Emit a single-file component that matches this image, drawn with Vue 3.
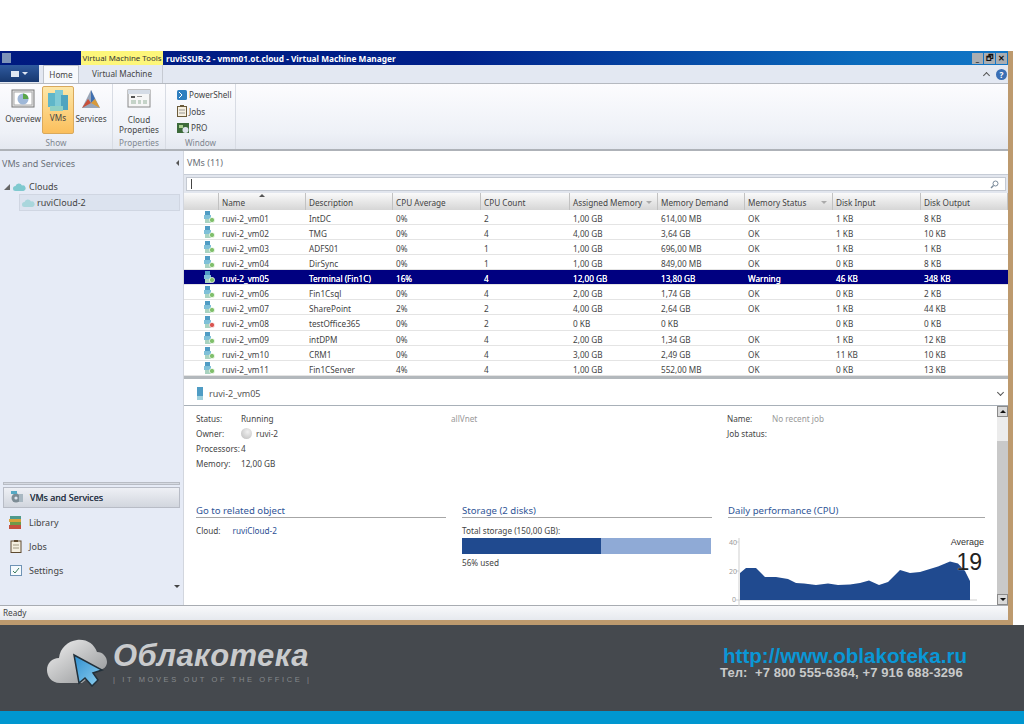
<template>
  <div class="page">
    <div class="top-space"></div>
    <div class="window">
      <div class="titlebar">
        <span class="app-icon"></span>
        <span class="tool-tag">Virtual Machine Tools</span>
        <span class="title">ruviSSUR-2 - vmm01.ot.cloud - Virtual Machine Manager</span>
        <div class="win-btns">
          <span class="win-btn">_</span>
          <span class="win-btn">🗗︎</span>
          <span class="win-btn close">✕</span>
        </div>
      </div>

      <div class="tabs">
        <div class="file-btn"><span class="file-glyph"></span><span class="file-arrow"></span></div>
        <div class="tab active">Home</div>
        <div class="tab">Virtual Machine</div>
        <div class="tabs-right">
          <span class="caret-up"></span>
          <span class="help">?</span>
        </div>
      </div>

      <div class="ribbon">
        <div class="group group-show">
          <div class="group-items">
            <div class="rb-btn">
              <svg width="24" height="19" viewBox="0 0 24 19">
                <rect x="1" y="1" width="22" height="17" fill="#e8e8e8" stroke="#777" />
                <rect x="3" y="3" width="18" height="13" fill="#fff" stroke="#aaa" />
                <circle cx="12" cy="10" r="5.5" fill="#9fb8d8" />
                <path d="M12 10V4.5A5.5 5.5 0 0 1 17.5 10Z" fill="#5aa648" />
              </svg>
              <span>Overview</span>
            </div>
            <div class="rb-btn selected">
              <svg width="24" height="24" viewBox="0 0 24 24">
                <rect x="2" y="4" width="8" height="14" fill="#5fb6c9" />
                <rect x="9" y="1" width="8" height="18" fill="#7fcad6" />
                <rect x="15" y="6" width="7" height="15" fill="#4fa4bf" />
                <rect x="4" y="17" width="13" height="5" fill="#8fd0c4" />
              </svg>
              <span>VMs</span>
            </div>
            <div class="rb-btn services">
              <svg width="22" height="22" viewBox="0 0 22 22">
                <path d="M11 1L20 19H2Z" fill="#9aa6b8" />
                <path d="M11 1L15 10L11 14Z" fill="#3f6fb0" />
                <path d="M2 19L8 10L11 14Z" fill="#c9503a" />
                <path d="M20 19L15 10L11 14Z" fill="#d99a3a" />
              </svg>
              <span>Services</span>
            </div>
          </div>
          <div class="group-name">Show</div>
        </div>

        <div class="group group-props">
          <div class="group-items">
            <div class="rb-btn cloud-props">
              <svg width="24" height="19" viewBox="0 0 24 19">
                <rect x="1" y="1" width="22" height="17" fill="#f6f6f6" stroke="#8a8a8a" />
                <rect x="1" y="1" width="22" height="4" fill="#d5dce6" />
                <rect x="4" y="7" width="4" height="2" fill="#555" />
                <rect x="10" y="7" width="5" height="1" fill="#999" />
                <rect x="4" y="11" width="5" height="4" fill="#c5d3c8" />
                <rect x="11" y="11" width="3" height="4" fill="#c5d3c8" />
                <rect x="16" y="11" width="4" height="4" fill="#c5d3c8" />
              </svg>
              <span>Cloud<br />Properties</span>
            </div>
          </div>
          <div class="group-name">Properties</div>
        </div>

        <div class="group group-window">
          <div class="window-items">
            <div class="rb-small">
              <svg width="10" height="10" viewBox="0 0 10 10"><rect width="10" height="10" rx="1.5" fill="#2f7fbf" /><path d="M2 2l3 3-3 3" stroke="#fff" fill="none" /></svg>
              PowerShell
            </div>
            <div class="rb-small">
              <svg width="10" height="12" viewBox="0 0 10 12"><rect x=".5" y="1.5" width="9" height="10" fill="#f5efe0" stroke="#6a5a3a" /><rect x="3" y="0" width="4" height="2" fill="#6a5a3a" /><path d="M2 5h6M2 8h6" stroke="#999" /></svg>
              Jobs
            </div>
            <div class="rb-small">
              <svg width="12" height="10" viewBox="0 0 12 10"><rect width="12" height="10" fill="#3c6a3a" /><rect x="2" y="2" width="4" height="3" fill="#a8cf8e" /><circle cx="8.5" cy="7" r="3" fill="#dfe5ee" /></svg>
              PRO
            </div>
          </div>
          <div class="group-name">Window</div>
        </div>
      </div>

      <div class="main">
        <aside class="sidebar">
          <div class="side-head">
            <span>VMs and Services</span>
            <span class="collapse"></span>
          </div>
          <div class="tree">
            <div class="tree-root">
              <span class="tree-arrow"></span>
              <svg class="cloud" width="13" height="8" viewBox="0 0 13 8"><path d="M2.5 8A2.5 2.5 0 0 1 2.5 3 3.5 3.5 0 0 1 9 2.5 2.8 2.8 0 0 1 10.5 8Z" fill="#7fc9cf" /></svg>
              Clouds
            </div>
            <div class="tree-item">
              <svg class="cloud" width="13" height="8" viewBox="0 0 13 8"><path d="M2.5 8A2.5 2.5 0 0 1 2.5 3 3.5 3.5 0 0 1 9 2.5 2.8 2.8 0 0 1 10.5 8Z" fill="#a9d6dc" /></svg>
              ruviCloud-2
            </div>
          </div>
          <div class="side-nav">
            <div class="nav-sep"></div>
            <div class="nav-item current">
              <svg width="14" height="13" viewBox="0 0 14 13"><circle cx="6" cy="7" r="4.5" fill="#7d8c95" /><circle cx="6" cy="7" r="1.6" fill="#dfe5ee" /><rect x="1" y="0" width="6" height="3" fill="#56a9c4" /><rect x="9" y="3" width="4" height="8" fill="#a9b8c2" /></svg>
              VMs and Services
            </div>
            <div class="nav-item">
              <svg width="14" height="13" viewBox="0 0 14 13"><rect x="1" y="0" width="11" height="3" fill="#4f9a8c" /><rect y="3" width="12" height="3" fill="#d9a33a" /><rect x="1" y="6" width="11" height="3" fill="#6f9a4a" /><rect y="9" width="12" height="4" fill="#c4503e" /></svg>
              Library
            </div>
            <div class="nav-item">
              <svg width="14" height="13" viewBox="0 0 14 13"><rect x="2" y="1" width="10" height="11.5" fill="#f5efe0" stroke="#5e4a30" /><rect x="5" y="0" width="4" height="2" fill="#5e4a30" /><path d="M4 5h6M4 8h6" stroke="#a09880" /></svg>
              Jobs
            </div>
            <div class="nav-item">
              <svg width="14" height="13" viewBox="0 0 14 13"><rect x="1.5" y="1.5" width="11" height="10" fill="#f6fafd" stroke="#6f93b5" /><path d="M4 7l2 2 4-5" stroke="#3a7a5a" fill="none" /></svg>
              Settings
            </div>
            <div class="nav-more"><span></span></div>
          </div>
        </aside>

        <section class="content">
          <div class="content-head">VMs (11)</div>
          <div class="search">
            <span class="cursor"></span>
            <svg width="9" height="9" viewBox="0 0 9 9"><circle cx="5.5" cy="3.5" r="2.5" fill="none" stroke="#7a8a9a" /><path d="M3.5 5.5L1 8" stroke="#7a8a9a" stroke-width="1.4" /></svg>
          </div>

          <div class="grid">
            <div class="row header">
              <div class="cell first"></div>
              <div v-for="c in columns" :key="c.label" class="cell">
                {{ c.label }}
                <span v-if="c.filter" class="filter"></span>
                <span v-if="c.sort" class="sort"></span>
              </div>
            </div>
            <div v-for="vm in vms" :key="vm.name" class="row" :class="{ sel: vm.sel }">
              <div class="cell first">
                <svg width="11" height="12" viewBox="0 0 11 12">
                  <rect x="1" y="0" width="5" height="4" fill="#4f9cc4" />
                  <rect x="0" y="4" width="7" height="4" fill="#7fc0d8" />
                  <rect x="1" y="8" width="6" height="4" fill="#a9d3c0" />
                  <circle cx="8" cy="9" r="2.6" :fill="vm.off ? '#d9534f' : '#7fbf6a'" stroke="#fff" stroke-width=".7" />
                </svg>
              </div>
              <div class="cell">{{ vm.name }}</div>
              <div class="cell">{{ vm.desc }}</div>
              <div class="cell">{{ vm.avg }}</div>
              <div class="cell">{{ vm.count }}</div>
              <div class="cell">{{ vm.assigned }}</div>
              <div class="cell">{{ vm.demand }}</div>
              <div class="cell">{{ vm.status }}</div>
              <div class="cell">{{ vm.input }}</div>
              <div class="cell">{{ vm.output }}</div>
            </div>
          </div>

          <div class="detail-head">
            <svg width="8" height="13" viewBox="0 0 8 13"><rect x="1" y="0" width="6" height="9" fill="#4f9cc4" /><rect x="1" y="9" width="6" height="4" fill="#9fd0dc" /></svg>
            <span>ruvi-2_vm05</span>
            <span class="chevron"></span>
          </div>

          <div class="detail">
            <div class="detail-body">
              <div class="info-cols">
                <div class="info first-col">
                  <div class="kv"><span class="k">Status:</span>Running</div>
                  <div class="kv"><span class="k">Owner:</span><span class="avatar"></span>ruvi-2</div>
                  <div class="kv"><span class="k">Processors:</span>4</div>
                  <div class="kv"><span class="k">Memory:</span>12,00 GB</div>
                </div>
                <div class="info net">allVnet</div>
                <div class="info job">
                  <div class="kv"><span class="k">Name:</span><span class="muted">No recent job</span></div>
                  <div class="kv"><span class="k">Job status:</span></div>
                </div>
              </div>

              <div class="sections">
                <div class="section">
                  <h3>Go to related object</h3>
                  <div class="related">Cloud:<a>ruviCloud-2</a></div>
                </div>
                <div class="section">
                  <h3>Storage (2 disks)</h3>
                  <div class="storage-label">Total storage (150,00 GB):</div>
                  <div class="bar"><div class="bar-fill" :style="{ width: used + '%' }"></div></div>
                  <div class="storage-used">{{ used }}% used</div>
                </div>
                <div class="section perf">
                  <h3>Daily performance (CPU)</h3>
                  <div class="chart">
                    <svg width="257" height="72" viewBox="0 0 257 72">
                      <path d="M11 1V69M8 5h3M8 34h3M8 63h3M11 63H249" stroke="#cfcfcf" fill="none" />
                      <text x="1" y="8" class="axis">40</text>
                      <text x="1" y="37" class="axis">20</text>
                      <text x="4" y="65" class="axis">0</text>
                      <path :d="chartPath" fill="#204a8f" />
                    </svg>
                    <div class="avg-label">Average</div>
                    <div class="avg-value">19</div>
                  </div>
                </div>
              </div>
            </div>
            <div class="scrollbar">
              <span class="sb-btn"><i class="up"></i></span>
              <span class="sb-thumb"></span>
              <span class="sb-track"></span>
              <span class="sb-btn"><i class="down"></i></span>
            </div>
          </div>
        </section>
      </div>

      <div class="statusbar">Ready</div>
    </div>

    <footer class="footer">
      <div class="logo">
        <svg width="64" height="48" viewBox="0 0 64 48">
          <defs>
            <linearGradient id="cl" x1="0" y1="0" x2="1" y2="1">
              <stop offset="0" stop-color="#f2f2f2" />
              <stop offset="1" stop-color="#8f9193" />
            </linearGradient>
            <linearGradient id="ar" x1="0" y1="0" x2="1" y2="1">
              <stop offset="0" stop-color="#2f8fd0" />
              <stop offset="1" stop-color="#8fd0f0" />
            </linearGradient>
          </defs>
          <path d="M14 44C5 44 1 37 1 31 1 24 6 19 13 19 14 9 22 2 31 1 41 0 48 5 51 13 57 13 61 18 61 23 61 28 57 31 52 31L36 44Z" fill="url(#cl)" />
          <path d="M28 16L56 31 47 34 52 41 46 47 39 39 33 44Z" fill="url(#ar)" stroke="#22303a" stroke-width="1.5" />
        </svg>
        <div class="logo-text">
          <div class="brand">Облакотека</div>
          <div class="tagline">| IT MOVES OUT OF THE OFFICE |</div>
        </div>
      </div>
      <div class="contacts">
        <div class="url">http://www.oblakoteka.ru</div>
        <div class="tel">Тел:&nbsp; +7 800 555-6364, +7 916 688-3296</div>
      </div>
    </footer>
    <div class="blue-band"></div>
  </div>
</template>

<script setup>
const columns = [
  { label: 'Name', sort: true },
  { label: 'Description' },
  { label: 'CPU Average' },
  { label: 'CPU Count' },
  { label: 'Assigned Memory', filter: true },
  { label: 'Memory Demand' },
  { label: 'Memory Status', filter: true },
  { label: 'Disk Input' },
  { label: 'Disk Output' },
]

const vms = [
  { name: 'ruvi-2_vm01', desc: 'IntDC', avg: '0%', count: 2, assigned: '1,00 GB', demand: '614,00 MB', status: 'OK', input: '1 KB', output: '8 KB' },
  { name: 'ruvi-2_vm02', desc: 'TMG', avg: '0%', count: 4, assigned: '4,00 GB', demand: '3,64 GB', status: 'OK', input: '1 KB', output: '10 KB' },
  { name: 'ruvi-2_vm03', desc: 'ADFS01', avg: '0%', count: 1, assigned: '1,00 GB', demand: '696,00 MB', status: 'OK', input: '1 KB', output: '1 KB' },
  { name: 'ruvi-2_vm04', desc: 'DirSync', avg: '0%', count: 1, assigned: '1,00 GB', demand: '849,00 MB', status: 'OK', input: '0 KB', output: '8 KB' },
  { name: 'ruvi-2_vm05', desc: 'Terminal (Fin1C)', avg: '16%', count: 4, assigned: '12,00 GB', demand: '13,80 GB', status: 'Warning', input: '46 KB', output: '348 KB', sel: true },
  { name: 'ruvi-2_vm06', desc: 'Fin1Csql', avg: '0%', count: 4, assigned: '2,00 GB', demand: '1,74 GB', status: 'OK', input: '0 KB', output: '2 KB' },
  { name: 'ruvi-2_vm07', desc: 'SharePoint', avg: '2%', count: 2, assigned: '4,00 GB', demand: '2,64 GB', status: 'OK', input: '1 KB', output: '44 KB' },
  { name: 'ruvi-2_vm08', desc: 'testOffice365', avg: '0%', count: 2, assigned: '0 KB', demand: '0 KB', status: '', input: '0 KB', output: '0 KB', off: true },
  { name: 'ruvi-2_vm09', desc: 'intDPM', avg: '0%', count: 4, assigned: '2,00 GB', demand: '1,34 GB', status: 'OK', input: '1 KB', output: '12 KB' },
  { name: 'ruvi-2_vm10', desc: 'CRM1', avg: '0%', count: 4, assigned: '3,00 GB', demand: '2,49 GB', status: 'OK', input: '11 KB', output: '10 KB' },
  { name: 'ruvi-2_vm11', desc: 'Fin1CServer', avg: '4%', count: 4, assigned: '1,00 GB', demand: '552,00 MB', status: 'OK', input: '0 KB', output: '13 KB' },
]

const used = 56

// cpu history, x/y read off the chart in chart-box pixels
const cpu = [
  [12, 36], [18, 31], [28, 31], [37, 40], [48, 40], [60, 42], [68, 46], [76, 46.5], [88, 48],
  [100, 46.5], [110, 48], [122, 47.5], [132, 46], [141, 43.5], [151, 48], [160, 45], [172, 33],
  [182, 36], [192, 35], [210, 29.5], [222, 24.5], [230, 26.5], [237, 34], [242, 44],
]
const chartPath = 'M12 63 ' + cpu.map((p) => 'L' + p[0] + ' ' + p[1]).join(' ') + ' L242 63Z'
</script>

<style>
html,
body {
  margin: 0;
  background: #fff;
}
</style>

<style scoped>
.page {
  width: 1024px;
  height: 724px;
  display: flex;
  flex-direction: column;
  overflow: hidden;
  font-family: "Noto Sans", sans-serif;
  font-size: 8.2px;
  color: #444;
}
.top-space {
  height: 51px;
  flex: none;
}
.window {
  width: 1013px;
  height: 574px;
  box-sizing: border-box;
  flex: none;
  display: flex;
  flex-direction: column;
  border-right: 5px solid #bd9a6e;
  border-bottom: 5px solid #bd9a6e;
}

/* title bar */
.titlebar {
  height: 14px;
  flex: none;
  display: flex;
  align-items: center;
  background: linear-gradient(90deg, #001a80 0%, #00208a 45%, #0a6abc 85%, #1276c6 100%);
  color: #fff;
}
.app-icon {
  width: 9px;
  height: 10px;
  margin-left: 2px;
  background: #7d93b8;
}
.tool-tag {
  margin-left: 70px;
  width: 82px;
  height: 14px;
  line-height: 14px;
  font-size: 7.9px;
  text-align: center;
  background: #fdf67a;
  color: #333;
  white-space: nowrap;
}
.title {
  margin-left: 3px;
  font-size: 8.3px;
  font-weight: bold;
  white-space: nowrap;
}
.win-btns {
  margin-left: auto;
  margin-right: 1px;
  display: flex;
  gap: 1px;
}
.win-btn {
  width: 11px;
  height: 11px;
  line-height: 10px;
  text-align: center;
  background: #a9adb2;
  color: #111;
  font-size: 8px;
  font-weight: bold;
}

/* tabs */
.tabs {
  height: 19px;
  flex: none;
  display: flex;
  align-items: flex-end;
  background: #e3e8f2;
  border-bottom: 1px solid #b5b9c0;
  box-sizing: border-box;
}
.file-btn {
  width: 39px;
  height: 17px;
  margin-bottom: 1px;
  display: flex;
  align-items: center;
  justify-content: center;
  gap: 3px;
  background: linear-gradient(#2f5a9f, #17386f);
}
.file-glyph {
  width: 8px;
  height: 6px;
  background: #dfe7f3;
}
.file-arrow {
  border: 3px solid transparent;
  border-top-color: #dfe7f3;
  border-bottom: 0;
}
.tab {
  height: 18px;
  line-height: 18px;
  box-sizing: border-box;
  text-align: center;
}
.tab.active {
  width: 36px;
  margin-left: 4px;
  background: #f7f9fc;
  border: 1px solid #bfc4cc;
  border-bottom: 0;
}
.tab:not(.active) {
  width: 81px;
  margin-left: 3px;
  border-right: 1px solid #c6cad2;
}
.tabs-right {
  margin-left: auto;
  margin-right: 1px;
  height: 18px;
  display: flex;
  align-items: center;
  gap: 7px;
}
.caret-up {
  width: 4px;
  height: 4px;
  margin-top: 3px;
  border-left: 1px solid #555;
  border-top: 1px solid #555;
  transform: rotate(45deg);
}
.help {
  width: 11px;
  height: 11px;
  line-height: 11px;
  border-radius: 50%;
  text-align: center;
  background: #3a6fb5;
  color: #fff;
  font-weight: bold;
}

/* ribbon */
.ribbon {
  height: 67px;
  flex: none;
  box-sizing: border-box;
  display: flex;
  background: linear-gradient(#fcfcfe, #eef1f7 75%, #e4e8f0);
  border-bottom: 2px solid #aeb2b8;
}
.group {
  box-sizing: border-box;
  display: flex;
  flex-direction: column;
  border-right: 1px solid #d8dce4;
}
.group-show {
  width: 113px;
}
.group-props {
  width: 53px;
}
.group-window {
  width: 70px;
}
.group-items {
  flex: 1;
  display: flex;
  justify-content: center;
  padding-top: 2px;
}
.group-show .group-items {
  justify-content: flex-start;
  padding-left: 4px;
}
.group-name {
  height: 13px;
  line-height: 13px;
  text-align: center;
  color: #7f8790;
}
.rb-btn {
  box-sizing: border-box;
  height: 48px;
  padding-top: 3px;
  display: flex;
  flex-direction: column;
  align-items: center;
  text-align: center;
  line-height: 10px;
  gap: 6px;
  width: 38px;
  white-space: nowrap;
}
.rb-btn svg {
  flex: none;
}
.rb-btn.selected {
  width: 32px;
  padding-top: 2px;
  gap: 0;
  background: linear-gradient(#fde7a8, #fbbf5c);
  border: 1px solid #d9a95c;
  border-radius: 2px;
}
.rb-btn.services {
  width: 34px;
  gap: 3px;
}
.rb-btn.cloud-props {
  gap: 7px;
}
.window-items {
  flex: 1;
  padding: 5px 0 0 11px;
  display: flex;
  flex-direction: column;
  gap: 5.5px;
}
.rb-small {
  height: 11px;
  display: flex;
  align-items: center;
  gap: 2px;
  white-space: nowrap;
}

/* main area */
.main {
  flex: 1;
  min-height: 0;
  display: flex;
}
.sidebar {
  width: 183px;
  flex: none;
  display: flex;
  flex-direction: column;
  background: #e6ebf6;
  font-size: 9px;
}
.side-head {
  height: 24px;
  display: flex;
  align-items: center;
  justify-content: space-between;
  padding: 0 4px 0 2px;
  color: #6a7078;
}
.collapse {
  border: 3px solid transparent;
  border-right-color: #555;
  border-left: 0;
}
.tree {
  padding-top: 4px;
  flex: 1;
}
.tree-root {
  height: 15px;
  display: flex;
  align-items: center;
  padding-left: 4px;
  gap: 3px;
}
.tree-arrow {
  width: 0;
  border: 3px solid transparent;
  border-bottom-color: #666;
  border-right-color: #666;
}
.tree-item {
  margin-left: 19px;
  margin-right: 3px;
  height: 17px;
  display: flex;
  align-items: center;
  gap: 2px;
  padding-left: 2px;
  background: #dce3ef;
  border: 1px solid #d0d6e2;
  box-sizing: border-box;
}
.side-nav {
  height: 123px;
  flex: none;
  padding: 0 3px 0 3px;
  box-sizing: border-box;
}
.nav-sep {
  height: 3px;
  margin-bottom: 2px;
  background: #d6dae2;
  border: 1px solid #b8bcc4;
  box-sizing: border-box;
}
.nav-item {
  height: 24px;
  display: flex;
  align-items: center;
  gap: 6px;
  padding-left: 6px;
  box-sizing: border-box;
}
.nav-item.current {
  height: 21px;
  margin-bottom: 2px;
  background: linear-gradient(#eef0f5, #d2d6de);
  border: 1px solid #b8bcc6;
  color: #2f3a4a;
  text-shadow: 0 0 0.6px #2f3a4a;
}
.nav-more {
  display: flex;
  justify-content: flex-end;
  padding: 3px 0 0;
}
.nav-more span {
  border: 3px solid transparent;
  border-top-color: #444;
  border-bottom: 0;
}

/* right side */
.content {
  flex: 1;
  min-width: 0;
  display: flex;
  flex-direction: column;
  background: #fff;
  border-left: 1px solid #d2d6de;
}
.content-head {
  height: 24px;
  line-height: 24px;
  padding-left: 3px;
  flex: none;
  font-size: 9px;
  color: #6a7078;
  background: #fff;
  border-bottom: 1px solid #c6ccd6;
  box-sizing: border-box;
}
.search {
  height: 18px;
  flex: none;
  box-sizing: border-box;
  display: flex;
  align-items: center;
  justify-content: space-between;
  padding: 0 7px 0 5px;
  background: #fff;
  border: 2px solid #e2e6ee;
  box-shadow: inset 0 0 0 1px #c4c9d2;
}
.cursor {
  width: 1px;
  height: 10px;
  background: #444;
}
.grid {
  flex: none;
  height: 186px;
  border-bottom: 3px solid #b3b8bc;
  box-sizing: border-box;
  overflow: hidden;
}
.row {
  display: grid;
  grid-template-columns: 35px 87px 87px 88px 89px 88px 87px 88px 88px 1fr;
  height: 15.07px;
  border-bottom: 1px solid #e4e4e4;
  box-sizing: border-box;
  line-height: 18px;
}
.row.header {
  height: 17px;
  line-height: 19px;
  background: linear-gradient(#fafafa, #d6d6d6);
  border-bottom: 0;
}
.header .cell {
  position: relative;
  border-right: 1px solid #c2c2c2;
}
.cell {
  padding-left: 3px;
  white-space: nowrap;
  overflow: hidden;
}
.cell.first {
  padding: 0 0 0 20px;
  display: flex;
  align-items: center;
}
.row.sel {
  background: #000080;
  color: #fff;
  text-shadow: 0 0 0.6px #fff;
}
.filter {
  position: absolute;
  right: 5px;
  top: 8px;
  border: 3px solid transparent;
  border-top-color: #aaa;
  border-bottom: 0;
}
.sort {
  position: absolute;
  left: 40px;
  top: 1px;
  border: 3px solid transparent;
  border-bottom-color: #555;
  border-top: 0;
}

/* detail pane */
.detail-head {
  height: 27px;
  flex: none;
  box-sizing: border-box;
  display: flex;
  align-items: center;
  gap: 5px;
  padding: 2px 5px 0 12px;
  border-bottom: 1px solid #a8b0b8;
  font-size: 9px;
  color: #555;
}
.chevron {
  margin-left: auto;
  width: 4px;
  height: 4px;
  margin-bottom: 2px;
  border-right: 1px solid #555;
  border-bottom: 1px solid #555;
  transform: rotate(45deg);
}
.detail {
  flex: 1;
  min-height: 0;
  display: flex;
}
.detail-body {
  flex: 1;
  min-width: 0;
  padding: 5px 13px 0 12px;
  box-sizing: border-box;
  display: flex;
  flex-direction: column;
}
.info-cols {
  height: 92px;
  flex: none;
  display: flex;
}
.info {
  width: 276px;
  flex: none;
}
.first-col {
  width: 255px;
}
.kv {
  display: flex;
  align-items: center;
  height: 15px;
}
.k {
  width: 45px;
  flex: none;
}
.avatar {
  width: 11px;
  height: 11px;
  margin-right: 4px;
  border-radius: 50%;
  background: radial-gradient(circle at 60% 35%, #f0f0f0, #bbb);
}
.net {
  height: 15px;
  line-height: 15px;
  color: #999;
}
.muted {
  color: #999;
}
.sections {
  display: flex;
}
.section {
  width: 250px;
  margin-right: 16px;
  flex: none;
}
.section.perf {
  width: 257px;
  margin-right: 0;
}
.section h3 {
  margin: 0 0 7px;
  height: 15px;
  line-height: 15px;
  font-size: 9.6px;
  font-weight: normal;
  color: #2f5597;
  border-bottom: 1px solid #a6a6a6;
  box-sizing: border-box;
}
.related a {
  margin-left: 12px;
  color: #2a4f94;
}
.storage-label {
  height: 12px;
}
.bar {
  width: 249px;
  height: 16px;
  margin-top: 1px;
  background: #8faad6;
}
.bar-fill {
  height: 16px;
  background: #204a8f;
}
.storage-used {
  margin-top: 3px;
}
.chart {
  position: relative;
  height: 72px;
  margin-top: 19px;
}
.chart svg {
  display: block;
}
.axis {
  font-size: 7px;
  fill: #999;
}
.avg-label {
  position: absolute;
  right: 1px;
  top: 0;
  font-family: "Liberation Sans", sans-serif;
  font-size: 9px;
  color: #333;
}
.avg-value {
  position: absolute;
  right: 3px;
  top: 13px;
  font-family: "Liberation Sans", sans-serif;
  font-size: 23px;
  line-height: 24px;
  color: #222;
  text-shadow: 0 0 1px #fff;
}
.scrollbar {
  width: 11px;
  flex: none;
  display: flex;
  flex-direction: column;
  background: #c9c9c9;
}
.sb-btn {
  height: 11px;
  flex: none;
  display: flex;
  align-items: center;
  justify-content: center;
  background: #d9d9d9;
  box-shadow: inset 0 0 0 1px #8a8a8a;
}
.sb-btn i {
  border: 3px solid transparent;
}
.sb-btn .up {
  border-bottom-color: #111;
  border-top: 0;
}
.sb-btn .down {
  border-top-color: #111;
  border-bottom: 0;
}
.sb-thumb {
  height: 24px;
  flex: none;
  background: #ececec;
}
.sb-track {
  flex: 1;
}
.statusbar {
  height: 15px;
  flex: none;
  box-sizing: border-box;
  padding-left: 3px;
  line-height: 14px;
  border-top: 1px solid #a8acb2;
  background: linear-gradient(#f8f9fb, #e6e9ee);
}

/* company footer */
.footer {
  height: 86px;
  flex: none;
  display: flex;
  background: #45494e;
}
.logo {
  display: flex;
  margin-left: 46px;
  padding-top: 14px;
}
.logo svg {
  flex: none;
}
.logo-text {
  margin-left: 3px;
}
.brand {
  font-family: "Liberation Sans", sans-serif;
  font-style: italic;
  font-weight: bold;
  font-size: 31px;
  line-height: 34px;
  letter-spacing: 0.4px;
  color: #c9cbcd;
  white-space: nowrap;
}
.tagline {
  margin-top: 2px;
  font-family: "Liberation Sans", sans-serif;
  font-size: 7.5px;
  letter-spacing: 2.6px;
  color: #85898d;
  white-space: nowrap;
}
.contacts {
  margin-left: auto;
  width: 304px;
  padding-top: 21px;
  font-family: "Liberation Sans", sans-serif;
  font-weight: bold;
  white-space: nowrap;
}
.url {
  padding-left: 3px;
  font-size: 20.6px;
  line-height: 20px;
  color: #0a97d6;
}
.tel {
  font-size: 13px;
  line-height: 14px;
  letter-spacing: 0.1px;
  color: #c8c9ca;
}
.blue-band {
  flex: 1;
  background: #0097d0;
}
</style>
